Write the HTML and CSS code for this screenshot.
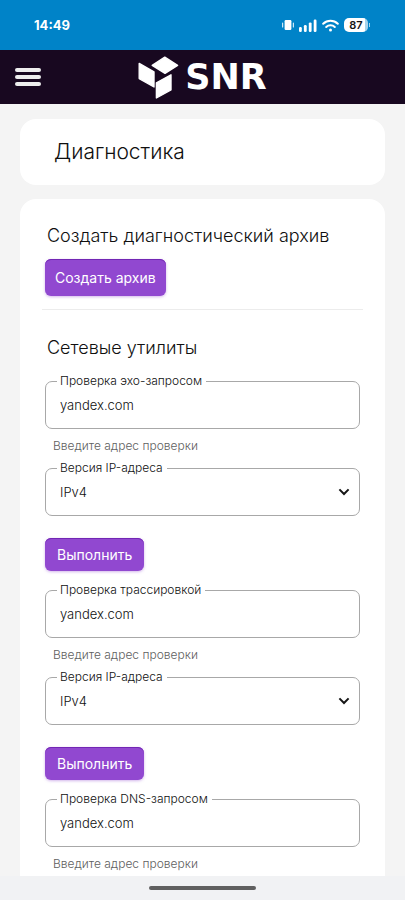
FILE: index.html
```html
<!DOCTYPE html>
<html lang="ru">
<head>
<meta charset="utf-8">
<meta name="viewport" content="width=device-width, initial-scale=1">
<title>SNR – Диагностика</title>
<link rel="stylesheet" href="styles.css">
</head>
<body>
<div class="status">
  <time class="clock">14:49</time>
  <div class="indicators">
    <svg width="12" height="12" viewBox="0 0 12 12" fill="#fff"><rect x="2.6" y="1" width="6.8" height="10" rx="1.2"/><rect x="0" y="3.5" width="1.2" height="5" rx=".6" opacity=".8"/><rect x="10.8" y="3.5" width="1.2" height="5" rx=".6" opacity=".8"/></svg>
    <svg width="18" height="13" viewBox="0 0 18 13" fill="#fff"><rect x="0" y="8" width="2.8" height="5" rx="1.2"/><rect x="4.9" y="6" width="2.8" height="7" rx="1.2"/><rect x="9.8" y="3.4" width="2.8" height="9.6" rx="1.2"/><rect x="14.7" y="0.6" width="2.8" height="12.4" rx="1.2"/></svg>
    <svg width="17" height="13" viewBox="0 0 17 13" fill="none" stroke="#fff" stroke-width="2" stroke-linecap="round"><path d="M1.2 4.8a10.4 10.4 0 0 1 14.6 0"/><path d="M4.2 8a6.2 6.2 0 0 1 8.6 0"/><circle cx="8.5" cy="11" r="1.5" fill="#fff" stroke="none"/></svg>
    <span class="battery">87</span>
  </div>
</div>
<header class="topbar">
  <button class="menu" type="button" aria-label="Меню"><span></span><span></span><span></span></button>
  <a class="logo" href="#">
    <svg width="41" height="43" viewBox="0 0 41 43" fill="#fff" stroke="#fff" stroke-width="1.4" stroke-linejoin="round"><path d="M14.2 9.4 26.8 1.2 39.6 9.4 27 17.4z"/><path d="M1.2 7.4 16 15.8V31L1.2 22.6z"/><path d="M18.4 26.8 33 18.8V34L18.4 42z"/></svg>
    <span>SNR</span>
  </a>
</header>
<main class="content">
  <section class="card title-card"><h1>Диагностика</h1></section>
  <section class="card tools">
    <h2>Создать диагностический архив</h2>
    <button class="btn btn-large" type="button">Создать архив</button>
    <hr>
    <h2>Сетевые утилиты</h2>
    <form class="tool">
      <div class="field">
        <label for="ping">Проверка эхо-запросом</label>
        <input id="ping" type="text" value="yandex.com">
      </div>
      <p class="hint">Введите адрес проверки</p>
      <div class="field">
        <label for="ping-ip">Версия IP-адреса</label>
        <select id="ping-ip"><option>IPv4</option><option>IPv6</option></select>
        <svg class="chevron" width="12" height="8" viewBox="0 0 12 8" fill="none" stroke="#151515" stroke-width="2"><path d="M1.4 1.4 6 6l4.6-4.6"/></svg>
      </div>
      <button class="btn run" type="button">Выполнить</button>
    </form>
    <form class="tool">
      <div class="field">
        <label for="trace">Проверка трассировкой</label>
        <input id="trace" type="text" value="yandex.com">
      </div>
      <p class="hint">Введите адрес проверки</p>
      <div class="field">
        <label for="trace-ip">Версия IP-адреса</label>
        <select id="trace-ip"><option>IPv4</option><option>IPv6</option></select>
        <svg class="chevron" width="12" height="8" viewBox="0 0 12 8" fill="none" stroke="#151515" stroke-width="2"><path d="M1.4 1.4 6 6l4.6-4.6"/></svg>
      </div>
      <button class="btn run" type="button">Выполнить</button>
    </form>
    <form class="tool">
      <div class="field">
        <label for="dns">Проверка DNS-запросом</label>
        <input id="dns" type="text" value="yandex.com">
      </div>
      <p class="hint">Введите адрес проверки</p>
    </form>
  </section>
</main>
<footer class="gesture"><span></span></footer>
</body>
</html>
```
FILE: styles.css
```css
* { box-sizing: border-box; }
body {
  margin: 0;
  min-height: 100vh;
  display: flex;
  flex-direction: column;
  background: #f4f4f4;
  color: #101010;
  font-family: Inter, "Liberation Sans", sans-serif;
  font-weight: 300;
}
h1, h2, p { margin: 0; font-weight: 300; }
button, input, select { font: inherit; color: inherit; }

.status {
  height: 50px;
  padding: 0 37px 0 34px;
  display: flex;
  align-items: center;
  justify-content: space-between;
  background: #0083c8;
  color: #fff;
}
.clock { font-size: 13px; font-weight: 700; }
.indicators { display: flex; align-items: center; gap: 5px; }
.battery {
  position: relative;
  width: 24px;
  height: 14px;
  border-radius: 5px;
  background: linear-gradient(to right, #fff 87%, #a6d3ec 87%);
  color: #151515;
  font-size: 11px;
  line-height: 14px;
  font-weight: 600;
  text-align: center;
}
.battery::after {
  content: "";
  position: absolute;
  right: -2px;
  top: 5px;
  width: 1px;
  height: 4px;
  background: #a6d3ec;
}

.topbar {
  height: 54px;
  padding: 0 15px;
  display: grid;
  grid-template-columns: 1fr auto 1fr;
  align-items: center;
  background: #180820;
}
.menu {
  width: 26px;
  padding: 0;
  border: 0;
  background: none;
  display: grid;
  gap: 3px;
}
.menu span { height: 4px; border-radius: 2px; background: #eee; }
.logo {
  display: flex;
  align-items: center;
  gap: 6px;
  color: #fff;
  font-family: "DejaVu Sans", sans-serif;
  font-size: 35px;
  line-height: 43px;
  font-weight: 700;
  text-decoration: none;
}

.content {
  flex: 1;
  padding: 15px 20px 0;
  display: flex;
  flex-direction: column;
  gap: 14px;
}
.card { background: #fff; border-radius: 16px; }
.title-card { padding: 18px 34px; }
h1 { font-size: 21px; line-height: 30px; }
.tools {
  flex: 1;
  padding: 25px 25px 0;
  border-radius: 16px 16px 0 0;
}
h2 { padding-left: 2px; font-size: 18px; line-height: 24px; }
.btn {
  height: 33px;
  padding: 0 12px;
  border: 0;
  border-radius: 6px;
  background: #9148d0;
  color: #fff;
  font-size: 14px;
  font-weight: 400;
  box-shadow: inset 0 1px #7226b4, 0 1px 3px #9148d066;
}
.btn-large { display: block; height: 37px; padding: 0 10px; margin-top: 11px; }
hr {
  height: 1px;
  margin: 13px -3px 26px;
  border: 0;
  background: #ececec;
}
.tool { margin-top: 21px; }
.tool + .tool { margin-top: 19px; }
.field { position: relative; }
.field label {
  position: absolute;
  left: 12px;
  top: -8px;
  padding: 0 4px 0 3px;
  background: #fff;
  font-size: 12px;
  line-height: 16px;
}
.field input, .field select {
  display: block;
  width: 100%;
  height: 48px;
  padding: 0 14px;
  border: 1px solid #a8a8a8;
  border-radius: 7px;
  background: #fff;
  font-size: 13px;
  appearance: none;
}
.chevron { position: absolute; right: 10px; top: 20px; pointer-events: none; }
.hint {
  padding: 8px 8px 13px;
  color: #606060;
  font-size: 12px;
  line-height: 18px;
}
.hint:last-child { padding-bottom: 2px; }
.run { display: block; margin-top: 22px; }

.gesture {
  height: 24px;
  display: flex;
  align-items: center;
  justify-content: center;
  background: #f1f2f4;
}
.gesture span { width: 107px; height: 4px; border-radius: 2px; background: #606060; }
```
